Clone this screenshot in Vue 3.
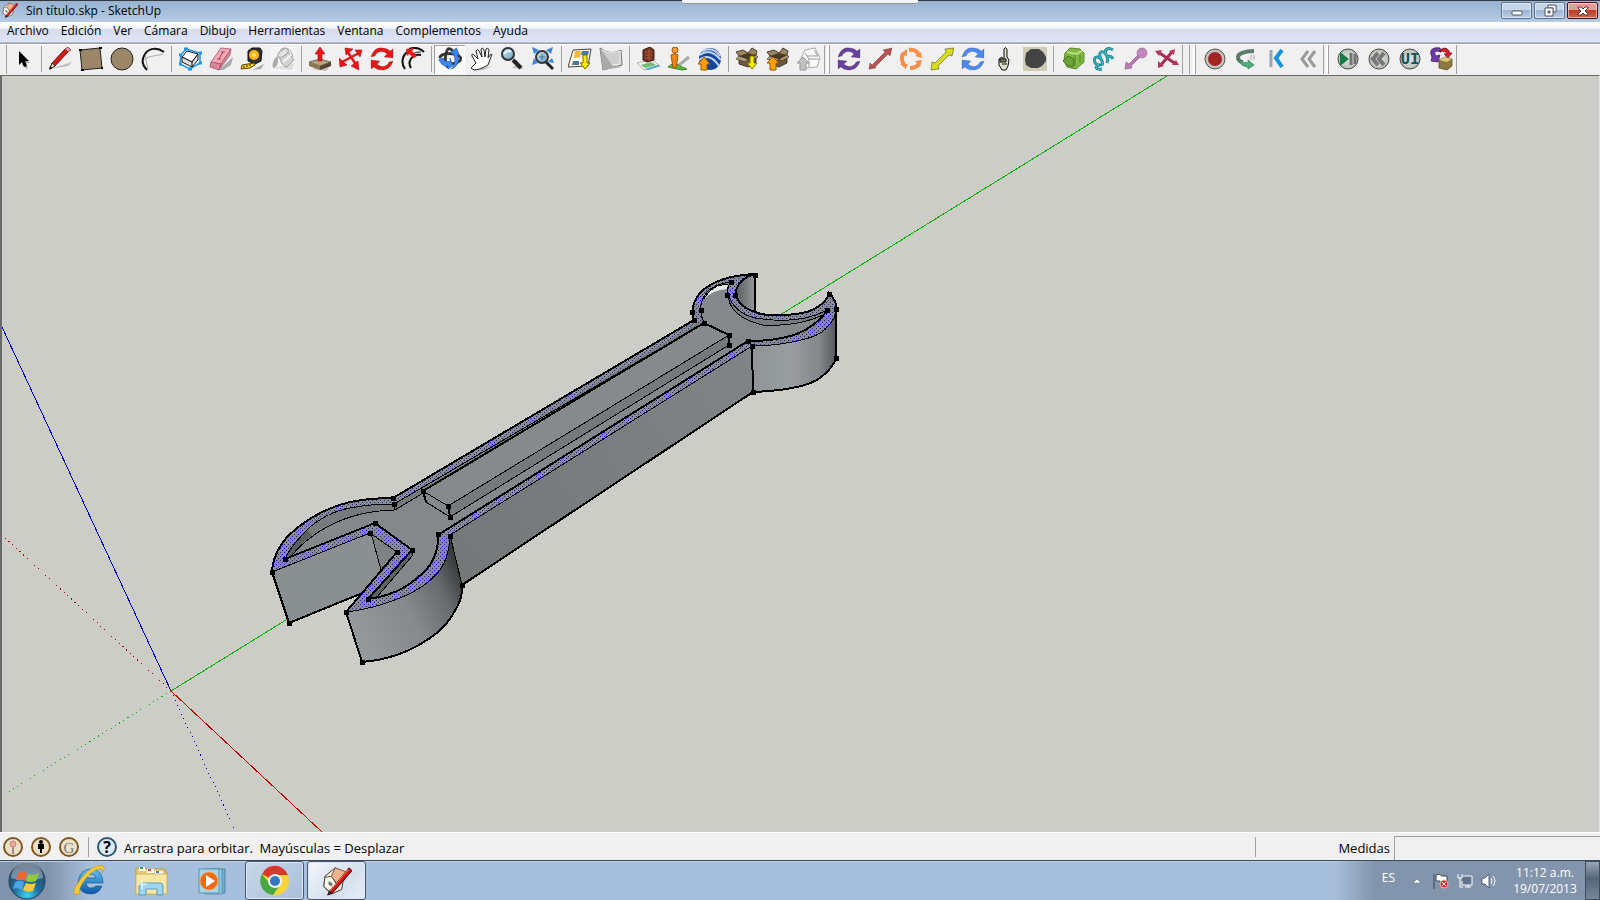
<template>
  <div class="window">
    <!-- icon sprites -->
    <svg class="sprites" aria-hidden="true">
      <defs>
        <linearGradient id="lens" x1="0" y1="0" x2="1" y2="1">
          <stop offset="0" stop-color="#c8e4f4" />
          <stop offset="1" stop-color="#6ea3c4" />
        </linearGradient>
        <radialGradient id="disc">
          <stop offset="0" stop-color="#e4e8e2" />
          <stop offset="1" stop-color="#b9bdb7" />
        </radialGradient>
      </defs>
      <symbol id="ic-app" viewBox="0 0 32 32">
        <path d="M3 11L14 2L24 7L21 25L10 30L2 22Z" fill="#f4ecdc" stroke="#333" />
        <path d="M14 2L25 6L24 15L17 20L10 11Z" fill="#f3b48e" stroke="#7a5940" />
        <path d="M3 12L10 11L16 20L10 29L2 22Z" fill="#faf6e8" stroke="#444" />
        <path d="M7 16l4 2v4l-4-2z" fill="#777" />
        <path d="M29 2L8 27L6 31L11 29L32 5Z" fill="#d91414" stroke="#300" />
        <path d="M28 4L9 26" stroke="#ff8a7a" />
        <path d="M8 27L6 31L11 29Z" fill="#222" />
      </symbol>
      <symbol id="ic-select" viewBox="0 0 24 24">
        <path d="M11 7l8 9h-4l2 5-2 1-2-5-2 2z" fill="#aaa" />
        <path d="M8 4v14l3-3 2 5 3-1-2-5h4z" fill="#000" />
      </symbol>
      <symbol id="ic-pencil" viewBox="0 0 24 24">
        <path d="M2 22L24 15L20 19Z" fill="#bbb" />
        <path d="M4 16L17 2L20 5L7 19L2 22Z" fill="#d81717" stroke="#4a0808" stroke-width=".8" />
        <path d="M17 2L20 0L23 3L20 5Z" fill="#ef94a9" stroke="#733" stroke-width=".8" />
        <path d="M4 16L7 19L2 22Z" fill="#f0d6a8" stroke="#222" stroke-width=".8" />
        <path d="M1 23l3-2-2-2z" />
      </symbol>
      <symbol id="ic-rect" viewBox="0 0 24 24">
        <path d="M1 3L21 1L23 21L3 23Z" fill="#9b8768" stroke="#222" />
        <path d="M0 3h3M20 1h3M22 21h2M2 23h3" stroke="#000" stroke-width="2" />
      </symbol>
      <symbol id="ic-circle" viewBox="0 0 24 24">
        <circle cx="12" cy="12" r="11" fill="#9b8768" stroke="#222" />
      </symbol>
      <symbol id="ic-arc" viewBox="0 0 24 24" fill="none">
        <path d="M2 13C9 8 17 9 22 7M4 9L7 22" stroke="#aaa" />
        <path d="M23 5C16 0 8 1 4 7C0 13 1 18 6 23" stroke="#111" stroke-width="2" />
      </symbol>
      <symbol id="ic-component" viewBox="0 0 24 24">
        <path d="M8 2L22 6L22 16L12 22L2 17L3 8Z" fill="#fff" stroke="#1996f0" stroke-width="1.5" />
        <path d="M9 4L20 7L14 15L4 10Z" fill="#fff" stroke="#111" />
        <path d="M4 10L14 15V20L4 15ZM14 15L20 7V13L14 20" fill="#d9dde0" stroke="#111" />
        <path d="M6 2h4M1 8h3M21 6h3M1 17h3M21 16h3M10 22h4" stroke="#1996f0" stroke-width="3" />
      </symbol>
      <symbol id="ic-eraser" viewBox="0 0 24 24">
        <path d="M10 23L24 10L22 18L14 23Z" fill="#aaa" />
        <path d="M12 1L22 2L12 17L2 15Z" fill="#f7a8b6" stroke="#9b5967" stroke-width=".8" />
        <path d="M2 15L12 17L10 23L1 20ZM22 2L21 8L10 23L12 17Z" fill="#de8698" stroke="#9b5967" stroke-width=".8" />
        <path d="M14 5l-4 7M12 5h4M8 12h4" stroke="#914456" />
      </symbol>
      <symbol id="ic-tape" viewBox="0 0 24 24">
        <path d="M12 23L24 17L21 22Z" fill="#aaa" />
        <path d="M8 4L12 1L20 1L22 4L21 14L15 17L8 14Z" fill="#333" stroke="#111" />
        <circle cx="14" cy="8" r="5" fill="#f8b71d" />
        <circle cx="14" cy="8" r="2" fill="#ffe068" />
        <path d="M14 16L2 18L1 22L10 21L15 18Z" fill="#f8c921" stroke="#594700" />
        <path d="M4 19v2M7 18v2M10 17v2" stroke="#333" />
      </symbol>
      <symbol id="ic-paint" viewBox="0 0 24 24">
        <rect width="24" height="24" fill="#f4f4f4" stroke="#fff" stroke-dasharray="1 1" />
        <path d="M3 21L24 16L21 23Z" fill="#ddd" />
        <path d="M8 9L16 3L23 13L16 20Q11 20 8 9Z" fill="#d3d3d3" stroke="#a0a0a0" />
        <path d="M12 15L20 8" stroke="#f4f4f4" stroke-width="2" />
        <ellipse cx="12" cy="6" rx="6" ry="3" transform="rotate(-35 12 6)" fill="#e4e4e4" stroke="#999" />
        <path d="M7 9C2 12 1 17 2 21Q7 20 7 13Z" fill="#aaa" />
        <path d="M9 3C14 -1 20 1 22 10" fill="none" stroke="#aaa" />
      </symbol>
      <symbol id="ic-push" viewBox="0 0 24 24">
        <path d="M4 22L24 17L18 24Z" fill="#bbb" />
        <path d="M1 15L12 12L23 15L12 19Z" fill="#b9a582" stroke="#333" stroke-width=".6" />
        <path d="M1 15L12 19V23L1 19Z" fill="#8b7654" />
        <path d="M23 15L12 19V23L23 19Z" fill="#54452f" />
        <path d="M12 0L17 7H14V14H10V7H7Z" fill="#f01414" stroke="#8e0000" stroke-width=".5" />
      </symbol>
      <symbol id="ic-move" viewBox="0 0 24 24">
        <path d="M8 4L18 19M3 15L20 6" stroke="#e81414" stroke-width="2.5" />
        <path d="M6 1L14 2L7 8ZM23 3L21 10L16 3ZM0 11L8 18L1 20ZM20 23L12 19L19 14Z" fill="#f01414" stroke="#8e0000" stroke-width=".5" />
      </symbol>
      <symbol id="ic-spin" viewBox="0 0 24 24">
        <path d="M1 10C3 3 8 0 12 1C16 1 18 2 20 4L23 2L23 11L14 10L17 7C13 3 7 4 5 9Z" fill="currentColor" stroke="#0004" stroke-width=".6" />
        <path d="M23 14C21 21 16 23 12 23C8 23 6 22 4 20L1 22L1 13L10 14L7 17C11 21 17 20 19 15Z" fill="currentColor" stroke="#0004" stroke-width=".6" />
      </symbol>
      <symbol id="ic-offset" viewBox="0 0 24 24" fill="none">
        <path d="M4 22C-1 15 2 7 8 4M8 2C14 0 19 1 23 5M10 21C6 15 11 6 20 8" stroke="#111" stroke-width="2" />
        <path d="M11 8Q15 4 20 5" stroke="#111" />
        <path d="M5 2L13 1L11 4L16 9L13 11L8 7L6 9Z" fill="#f01414" />
      </symbol>
      <symbol id="ic-orbit" viewBox="0 0 26 26" fill="none">
        <path d="M11 22C7 19 7 7 11 2C14 1 16 4 17 7" stroke="#333" stroke-width="3" />
        <path d="M25 13C24 6 2 5 2 12M14 18C19 18 23 17 25 13" stroke="#333" stroke-width="3" />
        <path d="M13 6L20 1L23 8L21 8C24 15 21 22 14 24C19 19 19 13 17 8Z" fill="#3c86f0" stroke="#174f9c" stroke-width=".6" />
        <path d="M1 13L6 12L7 15L13 16V12L16 20L11 24V21C6 21 2 18 1 13Z" fill="#3c86f0" stroke="#174f9c" stroke-width=".6" />
      </symbol>
      <symbol id="ic-hand" viewBox="0 0 24 24">
        <path d="M8 22L14 23L23 19L18 20Z" fill="#bbb" />
        <path d="M2 21L7 16L3 9Q2 6 5 8L9 12L7 4Q8 1 10 4L13 10L12 2Q14 0 15 3L16 10L17 2Q19 0 20 3L19 11L22 7Q24 7 22 10L19 18L11 22L5 23Z" fill="#fff" stroke="#222" />
      </symbol>
      <symbol id="ic-zoom" viewBox="0 0 24 24">
        <path d="M12 21L24 22L18 17Z" fill="#bbb" />
        <path d="M13 13L21 21" stroke="#222" stroke-width="4" />
        <circle cx="8" cy="7" r="6" fill="url(#lens)" stroke="#333" stroke-width="2" />
        <path d="M4 7Q8 2 11 5" fill="none" stroke="#e6f5ff" stroke-width="2" />
      </symbol>
      <symbol id="ic-extents" viewBox="0 0 24 24">
        <path d="M15 15L22 22" stroke="#222" stroke-width="3" />
        <circle cx="11" cy="10" r="6" fill="url(#lens)" stroke="#333" stroke-width="2" />
        <path d="M8 10h6M11 7v6" stroke="#40738d" />
        <path d="M1 0l7 3-5 4ZM22 0l-7 3 5 4ZM1 18l2-7 4 5ZM23 16l-2-5-4 4Z" fill="#3887e0" />
      </symbol>
      <symbol id="ic-map" viewBox="0 0 24 24">
        <path d="M5 3L23 2L20 19L0 20Z" fill="#fff7dd" stroke="#444" />
        <path d="M7 4L13 4L12 10L6 11Z" fill="#f0b834" />
        <path d="M14 4h7l-1 4h-7zM5 14h6v4H4z" fill="#4778a8" />
        <path d="M15 8h4v8h3l-5 6-5-6h3z" fill="#ffed00" stroke="#766c00" />
      </symbol>
      <symbol id="ic-terrain" viewBox="0 0 24 24">
        <path d="M1 1Q12 9 22 3L23 18L4 23Z" fill="#cecece" stroke="#777" />
        <path d="M1 1L13 18L23 20L4 23Z" fill="#aaa" />
        <path d="M3 3Q13 8 21 4L21 17L13 18" fill="none" stroke="#eee" />
      </symbol>
      <symbol id="ic-building" viewBox="0 0 24 24">
        <path d="M1 16L16 13L24 19L8 23Z" fill="#f2f2e7" stroke="#777" stroke-width=".5" />
        <path d="M5 18L15 15L20 18L9 21Z" fill="#72bd72" />
        <path d="M9 22L22 18L24 19L12 23Z" fill="#3da5cd" />
        <path d="M7 3L14 0L18 3V13L11 15L7 13Z" fill="#793221" stroke="#371912" />
        <path d="M9 5h7M9 8h7M9 11h7M13 2v12" stroke="#a5583f" />
      </symbol>
      <symbol id="ic-person" viewBox="0 0 24 24">
        <path d="M11 19L22 10" stroke="#aaa" stroke-width="3" />
        <path d="M1 20Q7 14 13 19L20 22Q15 24 10 22Z" fill="#5cb840" stroke="#3c8c28" />
        <path d="M4 8Q8 5 11 8L10 15L9 21H6Z" fill="#ee8718" stroke="#9f520b" />
        <circle cx="8" cy="3" r="3" fill="#f7a334" stroke="#9f520b" />
      </symbol>
      <symbol id="ic-earth" viewBox="0 0 24 24">
        <circle cx="12" cy="12" r="11" fill="#16469c" />
        <path d="M2 8Q12 0 23 13M1 13Q12 5 21 19M4 4Q15 -1 22 9" fill="none" stroke="#c3d5f0" stroke-width="2" />
        <path d="M6 10L12 17H9V23H3V17H0Z" fill="#ff9f00" stroke="#9a5900" />
      </symbol>
      <symbol id="ic-crate" viewBox="0 0 24 24">
        <path d="M4 9L13 12L21 8V16L13 20L4 17Z" fill="#6e5a3e" stroke="#2d2113" stroke-width=".8" />
        <path d="M4 9L1 5L8 3L13 6L17 1L22 4L21 8L13 12Z" fill="#9b8563" stroke="#2d2113" stroke-width=".8" />
        <path d="M4 9L13 6L21 8L13 12Z" fill="#4a3b27" />
        <path d="M13 12L10 15L1 12L4 9ZM13 12L16 14L23 10L21 8Z" fill="#b09a76" stroke="#2d2113" stroke-width=".6" />
      </symbol>
      <symbol id="ic-getmodel" viewBox="0 0 24 24">
        <use href="#ic-crate" />
        <path d="M15 9h4v7h3l-5 6-5-6h3z" fill="#ffed00" stroke="#766c00" />
      </symbol>
      <symbol id="ic-share" viewBox="0 0 24 24">
        <use href="#ic-crate" />
        <path d="M7 10L13 16H10V23H4V16H1Z" fill="#ff9f00" stroke="#9a5900" />
      </symbol>
      <symbol id="ic-upload" viewBox="0 0 24 24">
        <path d="M8 3L18 1L23 11L20 20L9 21L4 11Z" fill="#fafafa" stroke="#aaa" />
        <path d="M8 6L12 12L22 12M12 12V20M17 3L21 9L10 9" fill="none" stroke="#999" />
        <path d="M6 10L12 16H9V23H3V16H0Z" fill="#c2c2c2" stroke="#999" />
      </symbol>
      <symbol id="ic-line" viewBox="0 0 24 24">
        <path d="M1 23L2 15L5 16L16 5L15 2L24 1L22 9L19 8L8 19L9 22Z" fill="currentColor" stroke="#0008" stroke-width=".7" />
      </symbol>
      <symbol id="ic-slide" viewBox="0 0 24 24">
        <path d="M1 22L2 16L4 18L17 5L15 3L24 1L22 9L20 7L7 20L8 21Z" fill="currentColor" stroke="#0006" stroke-width=".7" />
      </symbol>
      <symbol id="ic-ring" viewBox="0 0 24 24" fill="none" stroke="currentColor" stroke-width="4">
        <path d="M4 7Q1 13 6 19M10 3Q17 2 20 8M11 21Q17 21 20 17" />
        <path d="M1 17H9L7 22ZM16 9L23 11L22 5ZM16 14L23 13L21 20ZM1 7L8 2V9Z" fill="currentColor" stroke="none" />
      </symbol>
      <symbol id="ic-finger" viewBox="0 0 24 24">
        <path d="M12 13V2Q13 -1 15 2V10L17 13L16 19L14 23H10L7 18V12L10 10Z" fill="#dddec6" stroke="#111" />
        <path d="M8 12h6v3H8zM10 17h5" fill="#7d8466" stroke="#111" />
      </symbol>
      <symbol id="ic-blob" viewBox="0 0 24 24">
        <path d="M0 0H24V24H0Z" fill="#cfcbb5" />
        <path d="M8 2H16L20 5L23 10V14L19 19L15 21H8L3 18L2 13L3 6Z" fill="#444" />
      </symbol>
      <symbol id="ic-foam" viewBox="0 0 24 24">
        <path d="M3 6L8 1L18 2L22 6V15L14 22L5 20L2 14Z" fill="#81b842" stroke="#5a892c" />
        <path d="M5 5L14 7L20 4" fill="none" stroke="#b6dc74" stroke-width="2" />
        <path d="M13 8V19M18 8V16" stroke="#659d35" stroke-width="2" />
        <path d="M1 14L6 9L12 12L11 20L5 18Z" fill="#6ba338" stroke="#4a7723" />
      </symbol>
      <symbol id="ic-coil" viewBox="0 0 24 24">
        <path id="coil" d="M9 22C3 23 1 20 6 18C0 17 0 9 5 10C9 11 10 16 9 18M8 12C5 6 8 3 12 6C15 9 15 13 14 16M13 8C11 2 15 0 20 3M15 10C17 8 19 10 20 12" fill="none" stroke="#1d8791" stroke-width="3" />
        <path d="M9 22C3 23 1 20 6 18C0 17 0 9 5 10C9 11 10 16 9 18M8 12C5 6 8 3 12 6C15 9 15 13 14 16M13 8C11 2 15 0 20 3M15 10C17 8 19 10 20 12" fill="none" stroke="#4dc6cb" stroke-width="1" />
      </symbol>
      <symbol id="ic-pin" viewBox="0 0 24 24">
        <path d="M1 22L2 15L5 17L14 8L16 10L7 19L8 21Z" fill="#b87bb5" stroke="#875285" stroke-width=".6" />
        <circle cx="18" cy="6" r="5" fill="#c187be" stroke="#9a6298" stroke-width=".6" />
      </symbol>
      <symbol id="ic-cross" viewBox="0 0 24 24">
        <path d="M3 5L21 17M5 19L17 5" stroke="#a92b58" stroke-width="3" />
        <path d="M0 4L7 3L4 9ZM14 4L20 2L19 8ZM24 18L17 18L21 13ZM3 14L9 19L3 21Z" fill="#b93460" />
      </symbol>
      <symbol id="ic-record" viewBox="0 0 24 24">
        <circle cx="12" cy="12" r="10" fill="url(#disc)" stroke="#55584b" stroke-width="1" />
        <circle cx="12" cy="12" r="7" fill="#a32422" />
      </symbol>
      <symbol id="ic-loop" viewBox="0 0 24 24">
        <path d="M20 4C10 4 4 7 4 10C4 13 6 15 9 15" fill="none" stroke="#5b7d69" stroke-width="4" />
        <path d="M4 12Q9 16 14 16V13L20 18L14 22V20Q6 19 4 12Z" fill="#4eb078" stroke="#276345" stroke-width=".6" />
        <path d="M17 8v5M20 8v5" stroke="#aaa" />
      </symbol>
      <symbol id="ic-first" viewBox="0 0 24 24" fill="none">
        <path d="M6 3V20" stroke="#9aa5ac" stroke-width="3" />
        <path d="M17 3L11 11L17 20" stroke="#1594dc" stroke-width="4" />
      </symbol>
      <symbol id="ic-back" viewBox="0 0 24 24" fill="none">
        <path d="M12 4L6 12L12 20M19 4L13 12L19 20" stroke="currentColor" stroke-width="3" />
      </symbol>
      <symbol id="ic-play" viewBox="0 0 24 24">
        <circle cx="12" cy="12" r="10" fill="url(#disc)" stroke="#45483f" />
        <path d="M4 5L13 12L4 19Z" fill="#147e42" />
        <path d="M15 6V18M19 7V17" stroke="#747474" stroke-width="3" />
      </symbol>
      <symbol id="ic-rewind" viewBox="0 0 24 24">
        <circle cx="12" cy="12" r="10" fill="url(#disc)" stroke="#45483f" />
        <path d="M11 6L6 12L11 18M17 6L12 12L17 18" fill="none" stroke="#777" stroke-width="4" />
      </symbol>
      <symbol id="ic-ui" viewBox="0 0 24 24">
        <circle cx="12" cy="12" r="10" fill="url(#disc)" stroke="#45483f" />
      </symbol>
      <symbol id="ic-export" viewBox="0 0 24 24">
        <path d="M3 10C-1 2 5 0 11 1L12 5L8 4Q4 5 7 9L11 8L9 15L2 14Z" fill="#713ba9" stroke="#35134f" stroke-width=".7" />
        <path d="M11 3Q18 -2 21 6H23L19 11L15 7H18Q16 3 11 5Z" fill="#d71e2c" stroke="#731019" stroke-width=".7" />
        <path d="M10 13L16 10L23 12V19L18 23L10 21Z" fill="#8f7743" stroke="#4c3d1b" stroke-width=".7" />
        <path d="M10 13L18 15L23 12L16 10Z" fill="#ddc377" />
      </symbol>
    </svg>

    <header class="titlebar">
      <span class="tab-handle"></span>
      <svg class="title-icon" aria-hidden="true"><use href="#ic-app" /></svg>
      <h1 class="title">Sin título.skp - SketchUp</h1>
      <div class="window-buttons">
        <button aria-label="Minimizar">
          <svg viewBox="0 0 18 14"><rect x="4" y="7" width="10" height="4" rx="1" fill="#fff" stroke="#50555e" /></svg>
        </button>
        <button aria-label="Restaurar">
          <svg viewBox="0 0 18 14">
            <path d="M7 1H15V8H12V4H7Z" fill="#fff" stroke="#50555e" />
            <path d="M4 4H12V12H4ZM7 7V9H9V7Z" fill="#fff" fill-rule="evenodd" stroke="#50555e" />
          </svg>
        </button>
        <button class="close" aria-label="Cerrar">
          <svg viewBox="0 0 18 14"><path d="M4 3H7L9 5L11 3H14V4L11 7L14 10V11H11L9 9L7 11H4V10L7 7L4 4Z" fill="#fff" stroke="#5b3938" /></svg>
        </button>
      </div>
    </header>

    <nav class="menubar">
      <button v-for="item in menus" :key="item">{{ item }}</button>
    </nav>

    <div class="toolbars">
      <div v-for="(bar, b) in toolbars" :key="b" class="toolbar" :class="bar.name">
        <template v-for="(tool, t) in bar.tools" :key="t">
          <span v-if="tool === '|'" class="sep"></span>
          <button v-else class="tool" :class="[tool.tint, { pressed: tool.icon === active }]" :aria-label="tool.label" @click="active = tool.icon">
            <svg viewBox="0 0 24 24">
              <use :href="'#ic-' + tool.icon" />
              <text v-if="tool.icon === 'ui'" x="12" y="17" text-anchor="middle" class="ui-mark">UI</text>
            </svg>
          </button>
        </template>
      </div>
    </div>

    <main class="viewport">
      <svg class="scene" role="img" aria-label="Modelo">
        <defs>
          <pattern id="dots" width="4" height="4" patternUnits="userSpaceOnUse">
            <rect width="4" height="4" fill="#888c8f" />
            <g shape-rendering="crispEdges" fill="#2020b0">
              <rect width="1" height="1" />
              <rect x="2" y="2" width="1" height="1" />
            </g>
          </pattern>
          <linearGradient id="lowSide" gradientUnits="userSpaceOnUse" x1="350" y1="630" x2="462" y2="575">
            <stop offset="0" stop-color="#959a9d" />
            <stop offset=".5" stop-color="#85898c" />
            <stop offset=".8" stop-color="#686b6d" />
            <stop offset="1" stop-color="#393b3c" />
          </linearGradient>
          <linearGradient id="highSide" gradientUnits="userSpaceOnUse" x1="752" y1="0" x2="836" y2="0">
            <stop offset="0" stop-color="#8f9497" />
            <stop offset=".45" stop-color="#989da0" />
            <stop offset=".8" stop-color="#84888b" />
            <stop offset="1" stop-color="#555859" />
          </linearGradient>
          <linearGradient id="jawSide" gradientUnits="userSpaceOnUse" x1="736" y1="0" x2="756" y2="0">
            <stop offset="0" stop-color="#5b5e60" />
            <stop offset="1" stop-color="#969b9e" />
          </linearGradient>
          <linearGradient id="handleSide" gradientUnits="userSpaceOnUse" x1="460" y1="560" x2="750" y2="360">
            <stop offset="0" stop-color="#747879" />
            <stop offset="1" stop-color="#808486" />
          </linearGradient>
        </defs>

        <g transform="translate(-2 -76)">
          <!-- axes -->
          <g class="axes">
            <path d="M171 691L2 327" stroke="#0000c0" />
            <path d="M171 691L236 832" stroke="#0000c0" class="negative" />
            <path d="M171 691L1167 76" stroke="#00b000" />
            <path d="M171 691L2 796" stroke="#00b000" class="negative" />
            <path d="M171 691L322 832" stroke="#b80000" />
            <path d="M171 691L2 535" stroke="#b80000" class="negative" />
          </g>

          <!-- walls -->
          <path d="M755 274L740 280L735 290L743 307L755 313Z" fill="url(#jawSide)" />
          <path d="M272 572L370 533L381 570L360 594L289 623Z" fill="#8a8f92" />
          <path d="M370 533L397 552L381 570Z" fill="#7e8285" />
          <path d="M450 535L752 346L753 392L462 585Z" fill="url(#handleSide)" />
          <path d="M752 346Q773 346 797 341T827 327Q836 319 836 309V358Q834 367 820 378Q803 390 753 392Z" fill="url(#highSide)" />
          <path d="M346 612Q373 609 400 598T440 570Q450 555 450 535L462 585Q463 596 457 607Q448 626 430 638Q400 659 362 662Z" fill="url(#lowSide)" />

          <!-- selected rim, with the sunken floor on top of it -->
          <path :d="outer" fill="url(#dots)" />
          <path :d="inner" fill="#84888b" />

          <!-- sunken walls -->
          <path d="M285 559Q290 547 307 530L312 535Q298 546 291 557Z" fill="#5c5f60" />
          <path d="M307 530Q325 514 350 508Q370 504 394 504V510Q345 511 312 535Z" fill="#777b7d" />
          <path d="M394 504L700 322L704 323L423 491L395 510Z" fill="#74787a" />
          <path d="M368 599L412 550L413 555L377 597Z" fill="#5f6264" />
          <path d="M728 285Q726 302 747 315Q763 323 803 319L827 310L826 314Q800 327 763 325Q728 317 728 293Z" fill="#787c7f" />
          <path d="M704 299Q708 291 717 286L728 284L727 289Q713 290 704 299Z" fill="#e7e8e6" />

          <!-- raised block -->
          <path d="M423 491L704 323L729 335L448 506Z" fill="#868a8d" />
          <path d="M448 506L729 335V345L450 517Z" fill="#75797b" />
          <path d="M423 491L448 506L450 517L426 502Z" fill="#85898c" />

          <g class="edges">
            <path d="M272 572L370 533L397 552L346 612Q373 609 400 598T440 570Q450 555 450 535L752 346Q773 346 797 341T827 327Q836 319 836 309" />
            <path d="M371 533L381 570M450 535L462 585" />
            <path :d="innerBack" />
            <path d="M394 504V510Q350 511 317 533Q298 546 291 557M395 510L423 493" />
            <path d="M413 555L377 597M412 550V555" />
            <path d="M423 491L448 506L729 335M426 502L450 517L729 345" />
            <path d="M728 293Q728 317 763 325Q800 327 827 313M704 299Q708 291 717 286L728 284" />
          </g>
          <g class="edges profile">
            <path :d="innerFront" />
            <path d="M346 612L397 552M272 572Q273 552 289 535Q316 510 350 502Q370 498 393 498L694 320Q689 307 700 293Q716 276 755 274V312" />
            <path d="M755 274Q740 278 736 290Q735 305 755 312Q772 319 807 312Q826 305 829 293Q837 301 836 309V358Q834 367 820 378Q803 390 753 392L462 585Q463 596 457 607Q448 626 430 638Q400 659 362 662L346 612" />
            <path d="M272 572L289 623L360 594M752 346L753 392M423 491L426 502M448 506L450 517M423 491L704 323L729 335V345" />
          </g>
          <rect v-for="[x, y] in endpoints" :key="x + '-' + y" :x="x - 2" :y="y - 2" width="5" height="5" />
        </g>
      </svg>
    </main>

    <footer class="statusbar">
      <button class="status-button" aria-label="Ubicación geográfica">
        <svg viewBox="0 0 20 20">
          <circle cx="10" cy="10" r="9" fill="#ede0cb" stroke="#81571e" stroke-width="2" />
          <path d="M10 10V17" stroke="#a88" stroke-width="2" /><circle cx="10" cy="7" r="3" fill="#eca698" stroke="#c08476" />
        </svg>
      </button>
      <button class="status-button" aria-label="Créditos">
        <svg viewBox="0 0 20 20">
          <circle cx="10" cy="10" r="9" fill="#ede0cb" stroke="#81571e" stroke-width="2" />
          <circle cx="10" cy="5" r="2" /><path d="M7 7H13V12H11V16H9V12H7Z" />
        </svg>
      </button>
      <button class="status-button" aria-label="Iniciar sesión">
        <svg viewBox="0 0 20 20">
          <circle cx="10" cy="10" r="9" fill="#ede0cb" stroke="#81571e" stroke-width="2" />
          <text x="10" y="16" text-anchor="middle" class="google-mark">G</text>
        </svg>
      </button>
      <span class="sep"></span>
      <button class="status-button help" aria-label="Ayuda">
        <svg viewBox="0 0 20 20">
          <circle cx="10" cy="10" r="9" fill="#dcecf7" stroke="#2f5873" stroke-width="2" />
          <text x="10" y="16" text-anchor="middle" class="help-mark">?</text>
        </svg>
      </button>
      <p class="hint">Arrastra para orbitar.&nbsp; Mayúsculas = Desplazar</p>
      <label class="measure-label" for="measure">Medidas</label>
      <input id="measure" v-model="measure" class="measure" type="text" />
    </footer>

    <div class="taskbar">
      <button class="start" aria-label="Inicio">
        <svg viewBox="0 0 38 38">
          <defs>
            <radialGradient id="orb" cx=".5" cy=".9" r=".8">
              <stop offset="0" stop-color="#3ed3f4" />
              <stop offset=".45" stop-color="#1e6c9c" />
              <stop offset="1" stop-color="#2c4763" />
            </radialGradient>
          </defs>
          <circle cx="19" cy="19" r="18" fill="url(#orb)" stroke="#213e58" />
          <path d="M3 16A16 16 0 0 1 35 16Q19 21 3 16Z" fill="#fff" opacity=".35" />
          <path d="M10 11Q14 8 19 11L17 19Q13 16 8 18Z" fill="#ec6733" />
          <path d="M20 12Q25 14 31 11L28 19Q23 21 18 19Z" fill="#91c93d" />
          <path d="M7 20Q12 17 16 20L14 28Q10 25 5 27Z" fill="#4ba5e4" />
          <path d="M18 21Q22 23 28 21L25 29Q20 31 15 28Z" fill="#fdca35" />
        </svg>
      </button>
      <button class="task" aria-label="Internet Explorer">
        <svg viewBox="0 0 34 34">
          <defs>
            <linearGradient id="ie" x1="0" y1="0" x2="0" y2="1">
              <stop offset="0" stop-color="#64c3f3" />
              <stop offset="1" stop-color="#0756a8" />
            </linearGradient>
          </defs>
          <path d="M31 19H14Q15 24 19 24Q22 24 24 22H30Q27 30 19 30Q7 30 6 18Q8 5 19 5Q31 6 31 19ZM14 14H24Q23 10 19 10Q15 10 14 14Z" fill="url(#ie)" fill-rule="evenodd" stroke="#164b82" stroke-width=".6" />
          <path d="M8 29C0 34 1 25 6 19C13 7 26 -1 31 2Q34 4 30 9Q31 4 27 5C19 6 5 23 8 29Z" fill="#f6c934" stroke="#b5892b" stroke-width=".5" />
        </svg>
      </button>
      <button class="task" aria-label="Explorador de Windows">
        <svg viewBox="0 0 34 34">
          <path d="M2 6V4H12L14 6H18V5H31V8H33V30H2Z" fill="#e8ca70" stroke="#b99b4c" />
          <path d="M5 3h6v4H5z" fill="#fff" /><path d="M6 3h3v2H6z" fill="#26ad35" />
          <path d="M13 5h7v4h-7z" fill="#fff" /><path d="M14 5h3v2h-3z" fill="#d84a32" />
          <path d="M21 7h8v4h-8z" fill="#fff" /><path d="M22 7h3v2h-3z" fill="#3384d2" />
          <path d="M2 10H33V30H2Z" fill="#f7e7a4" stroke="#d2b767" />
          <path d="M5 31V22Q5 19 8 19H26Q29 19 29 22V31H23V25H12V31Z" fill="#9fd4ee" stroke="#5b9abb" />
          <path d="M8 16V25M4 20H13" stroke="#fff" />
        </svg>
      </button>
      <button class="task" aria-label="Reproductor de Windows Media">
        <svg viewBox="0 0 34 34">
          <path d="M14 5H29V29H14Z" fill="#6fb0d2" stroke="#4e87a8" />
          <path d="M9 5H26V30H9Z" fill="#9acbe1" stroke="#5793b3" />
          <path d="M3 5H23V29H3Z" fill="#a9d5e8" stroke="#5793b3" />
          <circle cx="13" cy="17" r="9" fill="#ee6b16" stroke="#f7a45e" />
          <path d="M10 11L19 17L10 23Z" fill="#fff" />
        </svg>
      </button>
      <button class="task open" aria-label="Google Chrome">
        <svg viewBox="0 0 34 34">
          <circle cx="17" cy="17" r="14" fill="#f8d438" />
          <path d="M17 17L4 10A14 14 0 0 1 30 11H17Z" fill="#d8392c" />
          <path d="M4 10A14 14 0 0 0 15 31L22 21L11 19Z" fill="#49a844" />
          <circle cx="17" cy="17" r="7" fill="#f4f4f4" />
          <circle cx="17" cy="17" r="5" fill="#3279c4" />
        </svg>
      </button>
      <button class="task open current" aria-label="SketchUp">
        <svg class="app-icon"><use href="#ic-app" /></svg>
      </button>

      <div class="tray">
        <span class="language">ES</span>
        <button aria-label="Mostrar iconos ocultos"><svg viewBox="0 0 16 16"><path d="M4 10L8 6L12 10Z" fill="#fff" stroke="#5c6b7d" stroke-width=".5" /></svg></button>
        <button aria-label="Centro de actividades">
          <svg viewBox="0 0 16 16">
            <path d="M1 1V16M3 2Q7 0 9 3H14V10H9L7 8H3Z" fill="#fff" stroke="#39475a" />
            <circle cx="11" cy="11" r="4" fill="#d32727" stroke="#f7b1a8" /><path d="M9 9L13 13M13 9L9 13" stroke="#fff" />
          </svg>
        </button>
        <button aria-label="Red">
          <svg viewBox="0 0 16 16"><path d="M6 3H15V12H5V8" fill="#62748b" stroke="#fff" /><path d="M1 1V5H5V1M3 5V14H6M8 14H14M11 12V14" fill="none" stroke="#fff" /></svg>
        </button>
        <button aria-label="Volumen">
          <svg viewBox="0 0 16 16"><path d="M1 5H4L8 1V15L4 11H1Z" fill="#fff" stroke="#536276" /><path d="M10 5Q12 8 10 11M12 3Q16 8 12 13" fill="none" stroke="#fff" /></svg>
        </button>
        <time class="clock"><span>11:12 a.m.</span><span>19/07/2013</span></time>
        <button class="show-desktop" aria-label="Mostrar escritorio"></button>
      </div>
    </div>
  </div>
</template>

<script setup>
import { ref } from 'vue';

const menus = ['Archivo', 'Edición', 'Ver', 'Cámara', 'Dibujo', 'Herramientas', 'Ventana', 'Complementos', 'Ayuda'];

const active = ref('orbit');
const measure = ref('');

const tool = (icon, label, tint = '') => ({ icon, label, tint });

const toolbars = [
  {
    name: 'main',
    tools: [
      tool('select', 'Seleccionar'), '|',
      tool('pencil', 'Línea'), tool('rect', 'Rectángulo'), tool('circle', 'Círculo'), tool('arc', 'Arco'), '|',
      tool('component', 'Crear componente'), tool('eraser', 'Borrar'), tool('tape', 'Medir'), tool('paint', 'Pintar'), '|',
      tool('push', 'Empujar/tirar'), tool('move', 'Mover'), tool('spin', 'Rotar', 'red'), tool('offset', 'Equidistancia'), '|',
      tool('orbit', 'Orbitar'), tool('hand', 'Desplazar'), tool('zoom', 'Zoom'), tool('extents', 'Ver modelo centrado'), '|',
      tool('map', 'Añadir ubicación'), tool('terrain', 'Mostrar terreno'), '|',
      tool('building', 'Añadir edificio'), tool('person', 'Texturas de fotos'), tool('earth', 'Google Earth'), '|',
      tool('getmodel', 'Obtener modelos'), tool('share', 'Compartir modelo'), tool('upload', 'Compartir componente'),
    ],
  },
  {
    name: 'joints',
    tools: [
      tool('spin', 'Bisagra', 'purple'), tool('slide', 'Deslizador', 'brick'), tool('ring', 'Servo', 'orange'),
      tool('line', 'Pistón', 'yellow'), tool('spin', 'Motor', 'blue'), tool('finger', 'Conectar'), tool('blob', 'Material'), '|',
      tool('foam', 'Corredera'), tool('coil', 'Muelle'), tool('pin', 'Rótula'), tool('cross', 'Universal'),
    ],
  },
  {
    name: 'replay',
    tools: [tool('record', 'Grabar'), tool('loop', 'Repetir'), tool('first', 'Inicio'), tool('back', 'Retroceder', 'gray')],
  },
  {
    name: 'physics',
    tools: [tool('play', 'Reproducir'), tool('rewind', 'Reiniciar'), tool('ui', 'Interfaz'), tool('export', 'Exportar')],
  },
];

// wrench contours: the outline and the inside of the rim
const outer = 'M272 572Q273 552 289 535Q316 510 350 502Q370 498 393 498L694 320Q689 307 700 293Q716 276 755 274'
  + 'Q740 278 736 290Q735 305 755 312Q772 319 807 312Q826 305 829 293Q837 301 836 309'
  + 'Q836 319 827 327Q811 345 752 346L450 535Q450 555 440 570Q427 587 400 598Q373 609 346 612L397 552L370 533Z';
const innerBack = 'M285 559Q290 547 307 530T350 508Q370 504 394 504L704 323Q696 306 707 292Q714 284 731 282'
  + 'Q724 289 732 303Q743 318 763 319Q802 324 827 310';
const innerFront = 'M827 310Q823 318 810 327Q790 341 748 341'
  + 'L438 535Q439 562 417 578Q398 595 368 599L412 550L375 523L285 559';
const inner = innerBack + innerFront.replace('M', 'L') + 'Z';

const endpoints = [
  [272, 572], [289, 623], [346, 612], [362, 662], [285, 559], [375, 523], [370, 533], [397, 552], [412, 550],
  [368, 599], [393, 498], [394, 504], [438, 534], [450, 536], [462, 585], [423, 491], [448, 506], [450, 517],
  [694, 320], [692, 312], [704, 323], [701, 310], [729, 335], [729, 345], [748, 341], [752, 346], [753, 392],
  [755, 275], [731, 282], [727, 295], [735, 295], [829, 294], [836, 309], [827, 310], [836, 358],
];
</script>

<style>
body {
  margin: 0;
  overflow: hidden;
}
</style>

<style scoped>
.window {
  display: flex;
  flex-direction: column;
  height: 100vh;
  background: #f0f0f0;
  color: #000;
  font: 12px/18px "Open Sans", "Noto Sans", sans-serif;
}

button {
  padding: 0;
  border: 0;
  background: none;
  color: inherit;
  font: inherit;
}

.sprites {
  position: absolute;
  width: 0;
  height: 0;
}

/* title bar */
.titlebar {
  position: relative;
  display: flex;
  box-sizing: border-box;
  height: 22px;
  padding-left: 2px;
  border-top: 1px solid #35383e;
  background: linear-gradient(#98b3d1, #b5cbe5);
}
.tab-handle {
  position: absolute;
  top: -1px;
  left: 42.6%;
  width: 236px;
  height: 3px;
  border-bottom: 1px solid #999;
  border-radius: 0 0 3px 3px;
  background: #f4f4f4;
}
.title-icon {
  width: 16px;
  height: 16px;
  margin-top: 1px;
}
.title {
  margin: 0 auto 0 8px;
  font-size: 12px;
  font-weight: normal;
  line-height: 20px;
}
.window-buttons {
  display: flex;
  gap: 2px;
  padding: 1px 2px 0 0;
}
.window-buttons button {
  display: flex;
  align-items: center;
  justify-content: center;
  box-sizing: border-box;
  width: 31px;
  height: 17px;
  border: 1px solid #5b708c;
  border-radius: 2px;
  background: linear-gradient(#c5d6ea 48%, #9db5d2 50%, #b8cee5);
  box-shadow: inset 0 0 0 1px #ffffff80;
}
.window-buttons .close {
  border-color: #4a1218;
  background: linear-gradient(#dda092 48%, #b93c26 50%, #cb6a50);
}
.window-buttons svg {
  width: 18px;
  height: 14px;
}

/* menu */
.menubar {
  display: flex;
  box-sizing: border-box;
  height: 21px;
  padding: 0 7px 2px;
  gap: 12px;
  border-bottom: 1px solid #b5bcca;
  background: linear-gradient(#fff, #eff1f6 7px, #d5dbee 7px, #e0e5f5);
}

/* toolbars */
.toolbars {
  display: flex;
  box-sizing: border-box;
  height: 32px;
  padding: 1px 0 1px 7px;
  border-top: 1px solid #a0a0a0;
  box-shadow: inset 0 1px #fff;
}
.toolbar {
  display: flex;
  box-sizing: border-box;
  height: 29px;
  border-right: 1px solid #a0a0a0;
}
.toolbar + .toolbar {
  margin-left: 4px;
  padding-left: 3px;
  border-left: 1px solid #a0a0a0;
  box-shadow: -2px 0 #fff;
}
.toolbar.main {
  box-shadow: -1px 0 #a0a0a0;
}
.tool {
  display: flex;
  align-items: center;
  justify-content: center;
  box-sizing: border-box;
  width: 31px;
  height: 29px;
  padding-bottom: 1px;
}
.tool svg {
  width: 24px;
  height: 24px;
}
.tool.pressed {
  background: #f8f8f8;
  box-shadow: inset 1px 1px #a0a0a0, inset -1px -1px #fff;
}
.sep {
  width: 1px;
  height: 26px;
  margin: 1px 2px 0 3px;
  background: #a0a0a0;
}
.joints .sep {
  margin: 1px 4px 0 3px;
}
.toolbar.replay {
  margin-left: 12px;
  box-shadow: -2px 0 #fff, -5px 0 #f0f0f0, -6px 0 #a0a0a0;
}
.red { color: #e81717; }
.purple { color: #6840a0; }
.brick { color: #bd504b; }
.orange { color: #f69048; }
.yellow { color: #d9dc18; }
.blue { color: #4b88f3; }
.gray { color: #999; }
.ui-mark {
  fill: #17545e;
  font: bold 16px "Liberation Mono", monospace;
}

/* model */
.viewport {
  display: flex;
  flex: 1;
  min-height: 0;
  border: solid #696969;
  border-width: 1px 0 0 2px;
  border-right: 1px solid #e3e3e3;
  background: #cdcdc8;
}
.scene {
  flex: 1;
  width: 100%;
  overflow: hidden;
}
.axes,
.edges {
  fill: none;
  shape-rendering: crispEdges;
}
.edges {
  stroke: #000;
  stroke-width: 1px;
}
.profile {
  stroke-width: 2px;
}
.negative {
  stroke-dasharray: 1 4;
}

/* status bar */
.statusbar {
  display: flex;
  align-items: center;
  box-sizing: border-box;
  height: 28px;
  padding-left: 3px;
  border-top: 1px solid #fff;
  font-size: 13px;
}
.status-button {
  width: 20px;
  height: 20px;
  margin-right: 8px;
}
.status-button svg {
  display: block;
  width: 20px;
  height: 20px;
}
.statusbar .sep {
  height: 20px;
  margin: 0 8px 0 1px;
}
.help {
  margin-right: 7px;
}
.google-mark {
  fill: #777;
  font: 15px "Liberation Serif", serif;
}
.help-mark {
  font: bold 16px "Open Sans", sans-serif;
}
.hint {
  flex: 1;
  margin: 0;
  padding-top: 2px;
}
.measure-label {
  box-sizing: border-box;
  width: 139px;
  padding: 2px 4px 0 0;
  border-left: 1px solid #a0a0a0;
  text-align: right;
}
.measure {
  box-sizing: border-box;
  align-self: flex-end;
  width: 206px;
  height: 24px;
  border: 1px solid #a0a0a0;
  border-width: 1px 0 0 1px;
  background: #f0f0f0;
  font: inherit;
}

/* taskbar */
.taskbar {
  display: flex;
  gap: 3px;
  box-sizing: border-box;
  height: 40px;
  border-top: 1px solid #3d4b5e;
  background: linear-gradient(90deg, #8193ab 0, #8193ab 48px, #a6bfdc 90px);
  box-shadow: inset 0 1px #bccde2;
}
.start {
  width: 56px;
  padding-left: 8px;
}
.start svg {
  display: block;
  width: 38px;
  height: 38px;
}
.task {
  display: flex;
  align-items: center;
  justify-content: center;
  box-sizing: border-box;
  width: 59px;
  height: 39px;
}
.task svg {
  width: 34px;
  height: 34px;
}
.task.open {
  border: 1px solid #46566d;
  border-radius: 3px;
  background: linear-gradient(135deg, #c9d8ea, #b8cbe1 50%, #a9bfd9);
  box-shadow: inset 0 0 0 1px #dce7f3;
}
.task.current {
  background: linear-gradient(135deg, #f3f6fa, #d5e0ee 60%, #e5edf6);
}
.task .app-icon {
  width: 30px;
  height: 30px;
}
.tray {
  display: flex;
  align-items: center;
  margin-left: auto;
  padding-left: 48px;
  background: linear-gradient(90deg, #8395ac00, #8395ac 40px);
  color: #fff;
  line-height: 16px;
}
.tray svg {
  display: block;
  width: 16px;
  height: 16px;
}
.tray button {
  margin-right: 8px;
}
.language {
  margin: 0 14px 6px 0;
}
.clock {
  display: flex;
  flex-direction: column;
  align-items: center;
  width: 80px;
}
.tray .show-desktop {
  align-self: stretch;
  width: 15px;
  margin: 0;
  border: 1px solid #3d4b5e;
  background: linear-gradient(#9aa7b8, #56657a 45%, #76869b);
}
</style>
